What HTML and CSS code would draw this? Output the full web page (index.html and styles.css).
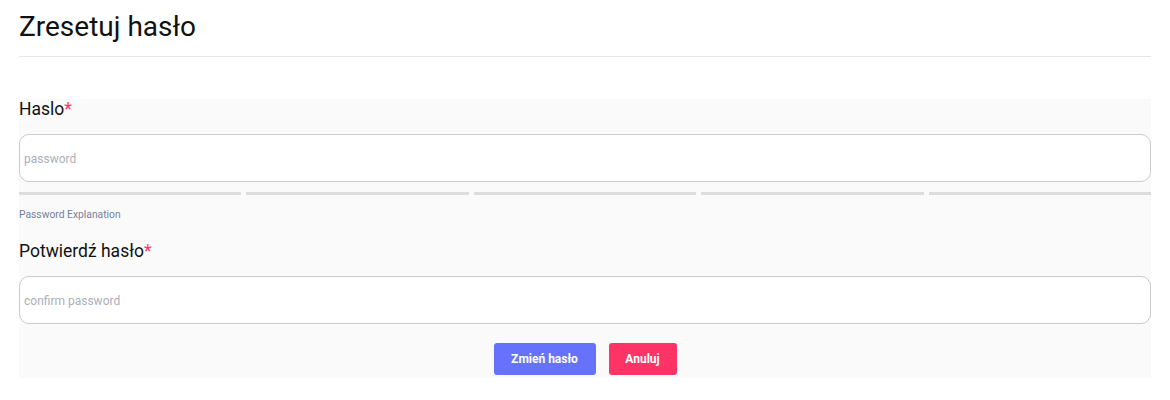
FILE: index.html
```html
<!DOCTYPE html>
<html lang="pl">
<head>
<meta charset="utf-8">
<title>Zresetuj hasło</title>
<link rel="stylesheet" href="styles.css">
</head>
<body>
<div class="page">
  <header class="header">
    <h1 class="title">Zresetuj hasło</h1>
  </header>
  <form class="form">
    <div class="field">
      <label class="label" for="pw">Haslo<span class="req">*</span></label>
      <input class="input" id="pw" type="password" placeholder="password">
      <div class="strength">
        <span class="seg"></span><span class="seg"></span><span class="seg"></span><span class="seg"></span><span class="seg"></span>
      </div>
      <div class="hint">Password Explanation</div>
    </div>
    <div class="field field-confirm">
      <label class="label" for="pw2">Potwierdź hasło<span class="req">*</span></label>
      <input class="input" id="pw2" type="password" placeholder="confirm password">
    </div>
    <div class="actions">
      <button type="button" class="btn btn-primary">Zmień hasło</button>
      <button type="button" class="btn btn-danger">Anuluj</button>
    </div>
  </form>
</div>
</body>
</html>
```

FILE: styles.css
```css
* { box-sizing: border-box; }
html, body { margin: 0; padding: 0; background: #fff; }
body { font-family: Roboto, "Liberation Sans", Arial, sans-serif; color: #111; }
.page { padding: 0 19px; }
.header {
  padding-top: 10px;
  padding-bottom: 13px;
  border-bottom: 1px solid #e6e6e6;
}
.title {
  margin: 0;
  font-size: 28px;
  font-weight: 400;
  line-height: 33px;
  color: #111;
}
.form {
  margin-top: 42px;
  background: #fafafa;
  padding-bottom: 3px;
}
.field { display: flex; flex-direction: column; }
.label {
  font-size: 17.5px;
  line-height: 21px;
  color: #111;
  margin-bottom: 14px;
}
.req { color: #ff3366; }
.input {
  height: 48px;
  border: 1px solid #cccccc;
  border-radius: 10px;
  background: #fff;
  padding: 1px 4px 0;
  font-family: Roboto, "Liberation Sans", Arial, sans-serif;
  font-size: 12px;
  outline: none;
}
.input::placeholder { color: #aab0ba; }
.strength {
  margin-top: 10px;
  display: grid;
  grid-template-columns: repeat(5, 1fr);
  gap: 5px;
}
.seg { height: 3px; background: #dddddd; }
.hint {
  margin-top: 13px;
  font-size: 10.3px;
  line-height: 13px;
  color: #74829a;
}
.field-confirm { margin-top: 20px; }
.actions {
  margin-top: 19px;
  display: flex;
  justify-content: center;
  gap: 13px;
}
.btn {
  height: 32px;
  border: none;
  border-radius: 3px;
  color: #fff;
  font-family: Roboto, "Liberation Sans", Arial, sans-serif;
  font-weight: 700;
  font-size: 12px;
  padding: 0 16px;
  cursor: pointer;
}
.btn-primary { background: #6672fb; width: 102px; }
.btn-danger { background: #ff3366; width: 68px; }
```
